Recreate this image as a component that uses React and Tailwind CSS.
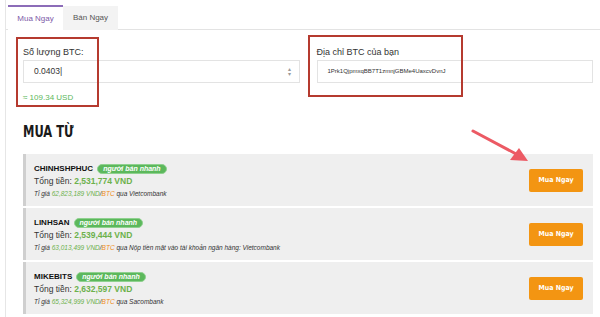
import React from "react";

const sellers = [
  { name: "CHINHSHPHUC", total: "2,531,774 VND", rate: "62,823,189", via: "Vietcombank" },
  { name: "LINHSAN", total: "2,539,444 VND", rate: "63,013,499", via: "Nộp tiền mặt vào tài khoản ngân hàng: Vietcombank" },
  { name: "MIKEBITS", total: "2,632,597 VND", rate: "65,324,999", via: "Sacombank" },
];

function SellerRow({ s }) {
  return (
    <div className="flex items-center justify-between h-[52px] bg-[#efefef] border-l-[3px] border-[#cfcfcf] pl-[8px] pr-[10px]">
      <div className="flex flex-col pt-[2px]">
        <div className="flex items-center gap-[4px] h-[12px]">
          <span className="text-[8px] font-bold text-[#111]">{s.name}</span>
          <span className="rounded-full bg-[#5cb85c] border border-[#8fd18f] px-[5px] h-[10px] leading-[8px] text-[7px] italic font-bold text-white">
            người bán nhanh
          </span>
        </div>
        <div className="text-[8.5px] leading-[13px] text-[#333]">
          Tổng tiền: <span className="font-bold text-[#6cb14c]">{s.total}</span>
        </div>
        <div className="text-[6.5px] leading-[11px] italic text-[#333]">
          Tỉ giá <span className="text-[#6cb14c]">{s.rate} VND</span>/<span className="text-[#f08c16]">BTC</span> qua {s.via}
        </div>
      </div>
      <button className="w-[54px] h-[23px] rounded-[2px] bg-[#f39512] text-white text-[7px] font-bold font-['DejaVu_Sans_Condensed',sans-serif]">
        Mua Ngay
      </button>
    </div>
  );
}

export default function App() {
  return (
    <div className="relative w-[600px] h-[317px] overflow-hidden bg-white font-['Liberation_Sans',Arial,sans-serif]">
      <div className="ml-[5px] border-l border-[#e6e6e6] h-full">
        {/* tabs */}
        <div className="flex pt-[5px] pl-[2px] border-b border-[#e3e3e3] h-[30px]">
          <div className="w-[55px] h-[25px] -mb-px bg-white border-t-2 border-[#8c6cb8] flex items-center justify-center text-[8px] text-[#7d5aa8]">
            Mua Ngay
          </div>
          <div className="w-[55px] h-[24px] bg-[#f3f3f3] mt-px flex items-center justify-center text-[8px] text-[#555]">
            Bán Ngay
          </div>
        </div>

        {/* form */}
        <div className="flex pl-[17px] pr-[7px] pt-[16px] gap-[17px]">
          <div className="flex-1 flex flex-col">
            <label className="text-[9px] text-[#333] h-[14px]">Số lượng BTC:</label>
            <div className="h-[23px] border border-[#e3e3e3] flex items-center justify-between pl-[10px] pr-[8px]">
              <span className="text-[8.5px] text-[#333]">0.0403|</span>
              <span className="text-[6px] leading-[5px] text-[#999] flex flex-col items-center">
                <span>▴</span>
                <span>▾</span>
              </span>
            </div>
            <div className="text-[8px] text-[#5cb85c] mt-[9px]">≈ 109.34 USD</div>
          </div>
          <div className="flex-1 flex flex-col">
            <label className="text-[9px] text-[#333] h-[14px]">Địa chỉ BTC của bạn</label>
            <div className="h-[23px] border border-[#e3e3e3] flex items-center pl-[10px]">
              <span className="text-[6px] text-[#333]">1Prk1QjpmxqBB7T1zmnjGBMe4UaxcvDvnJ</span>
            </div>
          </div>
        </div>

        {/* heading */}
        <h2 className="pl-[17px] mt-[20px] text-[15px] leading-[16px] font-bold text-[#1a1a1a] font-['DejaVu_Sans_Condensed',sans-serif]">
          <span className="inline-block scale-x-[0.85] origin-left">MUA TỪ</span>
        </h2>

        {/* list */}
        <div className="ml-[17px] mr-[7px] mt-[14px] flex flex-col gap-[2px]">
          {sellers.map((s) => (
            <SellerRow key={s.name} s={s} />
          ))}
        </div>
      </div>

      {/* annotations */}
      <div className="absolute left-[16px] top-[37px] w-[83px] h-[70px] border-2 border-[#b53a2f] pointer-events-none" />
      <div className="absolute left-[308px] top-[35px] w-[155px] h-[62px] border-2 border-[#b53a2f] pointer-events-none" />
      <svg className="absolute left-0 top-0 pointer-events-none" width="600" height="317">
        <line x1="473" y1="131" x2="518" y2="155" stroke="#ec5a64" strokeWidth="3" strokeLinecap="round" />
        <polygon points="528,161 510,160 519,148" fill="#ec5a64" />
      </svg>
    </div>
  );
}
